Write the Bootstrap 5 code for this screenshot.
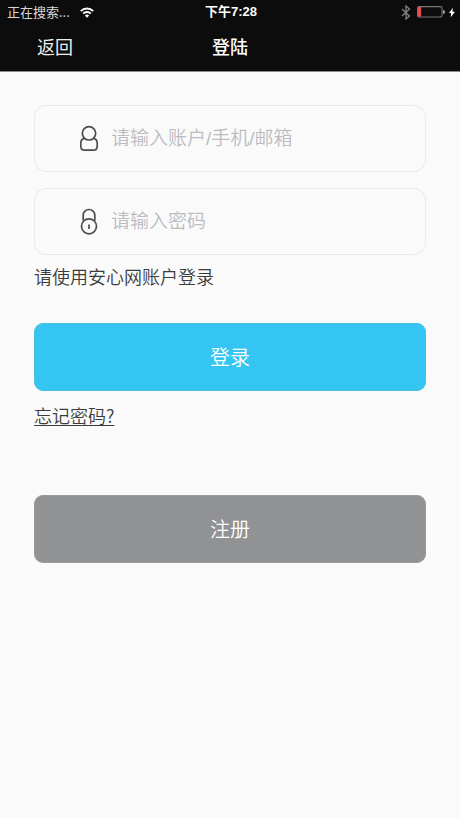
<!DOCTYPE html>
<html lang="zh-CN">
<head>
<meta charset="utf-8">
<meta name="viewport" content="width=device-width, initial-scale=1">
<title>登陆</title>
<link href="https://cdn.jsdelivr.net/npm/bootstrap@5.3.0/dist/css/bootstrap.min.css" rel="stylesheet">
<style>
  body { background: #fafafa; color: #3c3c3c; font-family: "Noto Sans CJK SC", sans-serif; }
  .top-area { background: #0c0c0c; color: #fff; border-bottom: 1px solid #8a8a8a; }
  .equal-cols { display: grid; grid-template-columns: 1fr auto 1fr; align-items: center; }
  .status-line { height: 24px; padding: 0 5px 0 7px; font-size: 13px; line-height: 24px; }
  .status-line .network { color: #d8d8d8; gap: 10px; }
  .status-line .clock { font-family: "Liberation Sans", "Noto Sans CJK SC", sans-serif; font-weight: 600; }
  .title-line { padding: 0 37px 2px; font-size: 18px; line-height: 45px; }
  .title-line h1 { font-size: 18px; line-height: 45px; font-weight: 500; }
  .title-line a { color: #eee; }
  main { padding: 33px 34px; }
  .entry { height: 67px; border: 1px solid #e9e9ea; border-radius: 12px; padding-left: 43px; background: #fafafb; margin-bottom: 16px; }
  .entry:focus-within { border-color: #34c5f2; }
  .entry .form-control { font-family: "Liberation Sans", "Noto Sans CJK SC", sans-serif; font-size: 19px; line-height: 28px; font-weight: 350; padding: 0 12px 0 11px; color: #3c3c3c; }
  .entry .form-control::placeholder { color: #bcbcc0; opacity: 1; }
  .hint { font-size: 18px; line-height: 28px; margin: -9px 0 33px; font-weight: 350; }
  .big-btn { height: 68px; border-radius: 9px; font-size: 20px; font-weight: 350; border: 1px solid; }
  .login-btn, .login-btn:hover { background: #34c5f2; border-color: #48bfe4; color: #fff; }
  .register-btn, .register-btn:hover { background: #909294; border-color: #989a9b; color: #fff; }
  .forgot { display: inline-block; font-size: 18px; line-height: 28px; font-weight: 350; color: #3c3c3c; margin: 10px 0 66px; text-underline-offset: 2px; text-decoration-thickness: 1px; }
</style>
<script src="https://cdn.jsdelivr.net/npm/bootstrap@5.3.0/dist/js/bootstrap.bundle.min.js" defer></script>
</head>
<body>
<header class="top-area">
  <div class="status-line equal-cols">
    <div class="network d-flex align-items-center">
      <span>正在搜索...</span>
      <svg width="14" height="11" viewBox="0 0 14 11" fill="none" stroke="#fff" stroke-width="2" aria-hidden="true">
        <path d="M.8 4.100a8.800 8.800 0 0 1 12.400 0M3.200 6.600a5.400 5.400 0 0 1 7.600 0"/>
        <path d="M7 10.800 4.900 8.500a3 3 0 0 1 4.200 0z" fill="#fff" stroke="none"/>
      </svg>
    </div>
    <div class="clock">下午7:28</div>
    <div class="d-flex align-items-center justify-content-end">
      <svg width="10" height="15" viewBox="0 0 10 15" fill="none" stroke="#808080" stroke-width="1.300" aria-hidden="true">
        <path d="M1 4l7.500 7L5 14V1l3.500 3L1 11"/>
      </svg>
      <svg class="ms-1 me-1" width="30" height="12" viewBox="-2 0 30 12" aria-hidden="true">
        <rect x=".6" y=".6" width="24.400" height="10.400" rx="1.500" fill="none" stroke="#777" stroke-width="1.100"/>
        <path d="M1 1h3.200v9.600H1z" fill="#e0504e"/>
        <path d="M26 4a2 2 0 0 1 0 4z" fill="#aaa"/>
      </svg>
      <svg width="6" height="11" viewBox="0 0 7 11" fill="#fff" aria-hidden="true"><path d="M4.500 0 0 6h2.500L2 11l5-6.400H4z"/></svg>
    </div>
  </div>
  <nav class="title-line equal-cols">
    <a class="text-decoration-none" href="#">返回</a>
    <h1 class="m-0">登陆</h1>
  </nav>
</header>
<main>
  <form>
    <div class="entry d-flex align-items-center">
      <label for="account" class="d-flex" aria-label="账户">
        <svg width="22" height="28" viewBox="0 0 22 28" fill="none" stroke="#4c4c4e" stroke-width="1.700" stroke-linejoin="round" aria-hidden="true">
          <circle cx="11" cy="8.300" r="6.700"/>
          <path d="M6.500 13.300C4 13.800 2.800 15.500 2.800 18v3.200c0 2.600 1.500 4 4 4h8.400c2.500 0 4-1.400 4-4V18c0-2.500-1.200-4.200-3.700-4.700"/>
        </svg>
      </label>
      <input id="account" type="text" class="form-control border-0 bg-transparent shadow-none" placeholder="请输入账户/手机/邮箱">
    </div>
    <div class="entry d-flex align-items-center">
      <label for="password" class="d-flex" aria-label="密码">
        <svg width="22" height="28" viewBox="0 0 22 28" fill="none" stroke="#4c4c4e" stroke-width="1.700" aria-hidden="true">
          <path d="M5.200 12.800V7.300a5.800 5.800 0 0 1 11.600 0v5.500"/>
          <circle cx="11" cy="18.300" r="7.500"/>
          <path d="M11 16.500V21"/>
        </svg>
      </label>
      <input id="password" type="password" class="form-control border-0 bg-transparent shadow-none" placeholder="请输入密码">
    </div>
    <p class="hint">请使用安心网账户登录</p>
    <button type="submit" class="btn big-btn login-btn d-block w-100">登录</button>
    <a class="forgot" href="#">忘记密码?</a>
    <button type="button" class="btn big-btn register-btn d-block w-100">注册</button>
  </form>
</main>
</body>
</html>
